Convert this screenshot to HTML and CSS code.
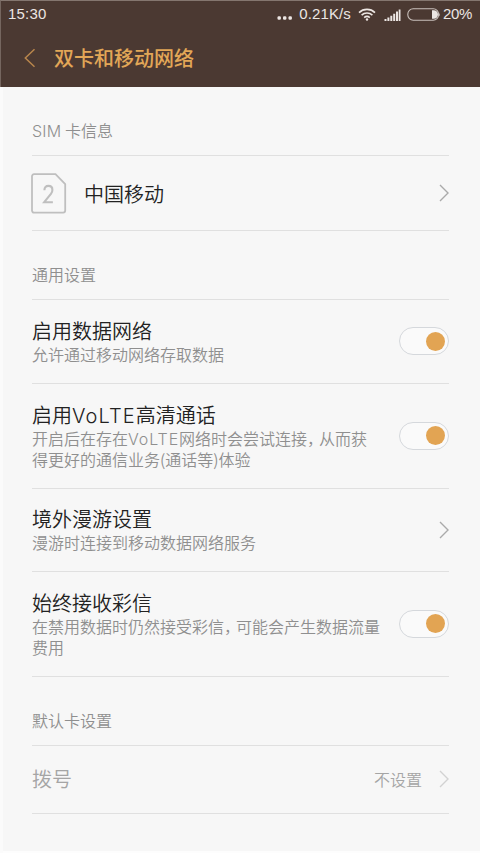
FILE: index.html
```html
<!DOCTYPE html>
<html lang="zh-CN">
<head>
<meta charset="utf-8">
<meta name="viewport" content="width=device-width">
<title>双卡和移动网络</title>
<link rel="stylesheet" href="styles.css">
</head>
<body>
<header class="top">
  <div class="status">
    <span class="clock">15:30</span>
    <svg class="dots" width="16" height="4" viewBox="0 0 16 4" fill="#ece6e3"><rect x="0.5" y="0.3" width="3.4" height="3.4" rx="1.2"/><rect x="6" y="0.3" width="3.4" height="3.4" rx="1.2"/><rect x="11.5" y="0.3" width="3.4" height="3.4" rx="1.2"/></svg>
    <span class="speed">0.21K/s</span>
    <svg class="wifi" width="18" height="13" viewBox="0 0 18 13" fill="none" stroke="#ece6e3" stroke-width="1.6"><path d="M1 4.6a11.5 11.5 0 0 1 16 0M3.6 7.2a7.8 7.8 0 0 1 10.8 0M6.2 9.7a4.2 4.2 0 0 1 5.6 0"/><circle cx="9" cy="11.5" r="1.2" fill="#ece6e3" stroke="none"/></svg>
    <svg class="signal" width="17" height="12" viewBox="0 0 17 12" fill="#ece6e3"><path d="M0.5 10h2v2h-2zM3.4 8.6h2V12h-2zM6.3 6.8h2V12h-2zM9.2 4.8h2V12h-2zM12 2.6h2V12h-2zM14.7 0.4h1.8V12h-1.8z"/></svg>
    <svg class="battery" width="34" height="13" viewBox="0 0 34 13"><rect x="0.8" y="0.8" width="30.8" height="11.4" rx="5.4" fill="none" stroke="#c9c0bc" stroke-width="1.1"/><path d="M25 2.3h1.8a4.2 4.2 0 0 1 0 8.4H25z" fill="#ece6e3"/><path d="M32.2 4.4q1.6 2.1 0 4.2z" fill="#c9c0bc"/></svg>
    <span class="percent">20%</span>
  </div>
  <div class="bar">
    <svg class="back" width="12" height="20" viewBox="0 0 12 20" fill="none" stroke="#b9864c" stroke-width="1.5"><path d="M10.5 1.2L1.3 10l9.2 8.8"/></svg>
    <h1>双卡和移动网络</h1>
  </div>
</header>
<main>
  <h2><span class="latin">SIM</span> 卡信息</h2>
  <div class="row sim">
    <svg class="card" width="36" height="41" viewBox="0 0 36 41" fill="none" stroke="#bfbfbf"><path stroke-width="1.8" d="M3 1.2h21.5L34.2 11v26.6a2 2 0 0 1-2 2H3a2 2 0 0 1-2-2V3.2a2 2 0 0 1 2-2z"/><path stroke-width="2.1" d="M13.4 17.2c0-2.8 1.5-4.3 4-4.3s4 1.5 4 4c0 1.5-.5 2.6-1.5 4L13.2 29.2h8.7"/></svg>
    <div class="title">中国移动</div>
    <svg class="arrow" width="10" height="18" viewBox="0 0 10 18"><path d="M1 1l8 8-8 8"/></svg>
  </div>
  <h2>通用设置</h2>
  <div class="row single">
    <div class="text"><div class="title">启用数据网络</div><p>允许通过移动网络存取数据</p></div>
    <div class="toggle"></div>
  </div>
  <div class="row">
    <div class="text"><div class="title">启用<span class="latin">VoLTE</span>高清通话</div><p>开启后在存在<span class="latin">VoLTE</span>网络时会尝试连接<span class="comma">，</span>从而获<br>得更好的通信业务(通话等)体验</p></div>
    <div class="toggle"></div>
  </div>
  <div class="row short">
    <div class="text"><div class="title">境外漫游设置</div><p>漫游时连接到移动数据网络服务</p></div>
    <svg class="arrow" width="10" height="18" viewBox="0 0 10 18"><path d="M1 1l8 8-8 8"/></svg>
  </div>
  <div class="row">
    <div class="text"><div class="title">始终接收彩信</div><p>在禁用数据时仍然接受彩信<span class="comma">，</span>可能会产生数据流量<br>费用</p></div>
    <div class="toggle"></div>
  </div>
  <h2>默认卡设置</h2>
  <div class="row dial">
    <div class="title">拨号</div>
    <span class="value">不设置</span>
    <svg class="arrow" width="10" height="18" viewBox="0 0 10 18"><path d="M1 1l8 8-8 8"/></svg>
  </div>
</main>
</body>
</html>
```
FILE: styles.css
```css
* { box-sizing: border-box; margin: 0; padding: 0; }
body {
  height: 853px;
  background: #f7f7f7;
  font-family: "Noto Sans CJK SC", sans-serif;
  font-weight: 350;
  color: #222;
  overflow: hidden;
  box-shadow: inset 3px 0 #fbfbfb, inset 0 -2px #fdfdfd;
}
svg { display: block; flex: none; }
.top {
  height: 87px;
  background: #4b3932;
  border-top: 1px solid #84766f;
  border-left: 1px solid #75665f;
}
.status {
  display: flex;
  align-items: center;
  height: 26px;
  padding: 0 8px 0 7px;
  font: 15px/26px "Liberation Sans", sans-serif;
  color: #ece6e3;
}
.clock { margin-right: auto; letter-spacing: 0.2px; }
.dots { margin: 7px 6px 0 0; }
.speed { margin-right: 7px; letter-spacing: 0.1px; }
.wifi { margin-right: 8px; }
.signal { margin: 1px 6px 0 0; }
.battery { margin-right: 2px; }
.percent { letter-spacing: -0.3px; }
.bar {
  display: flex;
  align-items: center;
  height: 61px;
  padding-left: 23px;
}
h1 {
  margin-left: 18px;
  font-size: 20px;
  line-height: 30px;
  font-weight: 500;
  color: #e2a757;
}
main { padding: 0 31px 0 32px; }
h2 {
  height: 69px;
  padding-top: 32px;
  border-bottom: 1px solid #e0e0e0;
  font-size: 16px;
  line-height: 22px;
  font-weight: 350;
  color: #8f8f8f;
}
.row {
  display: flex;
  align-items: center;
  justify-content: space-between;
  height: 105px;
  padding-bottom: 1px;
  border-bottom: 1px solid #e0e0e0;
}
.row.single { height: 84px; }
.row.short { height: 83px; }
.title { font-size: 20px; line-height: 26px; white-space: nowrap; }
p { font-size: 16px; line-height: 21px; color: #8f8f8f; white-space: nowrap; }
.latin { font-family: Inter, sans-serif; font-weight: 300; line-height: 1; letter-spacing: 0.055em; }
h2 .latin { letter-spacing: 0.2px; }
.comma { margin-right: 4px; font-feature-settings: "halt"; }
.row.sim { height: 75px; padding: 0; }
.card { margin-left: -1px; }
.sim .title { margin: 1px auto 0 17px; }
.toggle {
  display: flex;
  align-items: center;
  justify-content: flex-end;
  flex: none;
  width: 50px;
  height: 28px;
  padding-right: 3px;
  border: 1px solid #d5d8dc;
  border-radius: 14px;
  background: #fafafa;
}
.toggle::after {
  content: "";
  width: 19px;
  height: 19px;
  border-radius: 50%;
  background: #e2a453;
}
.arrow path { fill: none; stroke: #aaa; stroke-width: 1.4; }
.row.dial { height: 68px; }
.dial .title { color: #a5a5a5; }
.value { margin: 0 17px 0 auto; font-size: 16px; line-height: 22px; color: #a5a5a5; }
.dial .arrow path { stroke: #d2d2d2; }
```
